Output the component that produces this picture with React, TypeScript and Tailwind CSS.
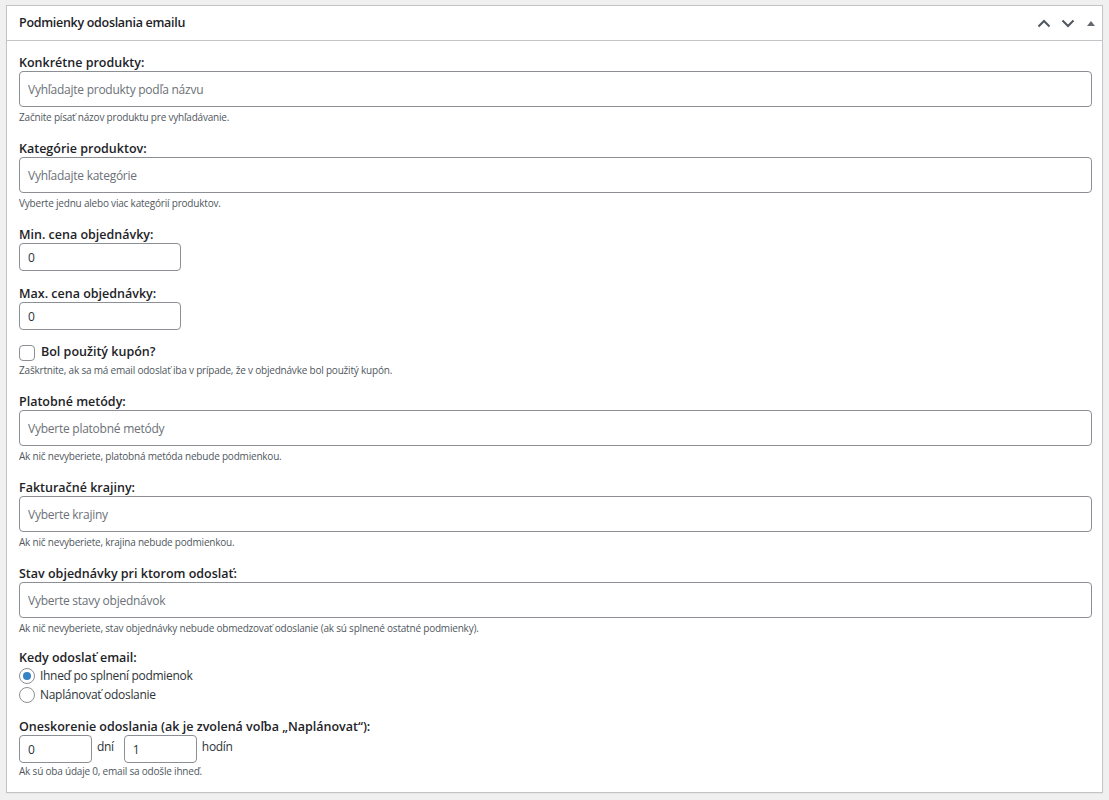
const label = 'block text-[12.5px] font-semibold leading-[17px] text-[#1d2327]';
const wide =
  'block h-[36px] w-full rounded-[4px] border border-[#8c8f94] bg-white px-[8px] text-[12px] tracking-[-0.25px] text-[#2c3338] placeholder-[#6b7177] outline-none';
const small =
  'block h-[28px] rounded-[4px] border border-[#8c8f94] bg-white px-[8px] text-[12px] text-[#2c3338] outline-none';
const desc = 'text-[10px] leading-[16px] tracking-[-0.2px] text-[#50575e]';
const text = 'text-[12px] tracking-[-0.3px] text-[#2c3338]';

function Chevron({ up }: { up?: boolean }) {
  return (
    <svg width="14" height="9" viewBox="0 0 14 9" fill="none">
      <path
        d={up ? 'M1.5 7.5 L7 2 L12.5 7.5' : 'M1.5 1.5 L7 7 L12.5 1.5'}
        stroke="#50575e"
        strokeWidth="2"
      />
    </svg>
  );
}

function SearchField({
  title,
  placeholder,
  help,
  first,
}: {
  title: string;
  placeholder: string;
  help: string;
  first?: boolean;
}) {
  return (
    <div className={first ? '' : 'mt-[15px]'}>
      <label className={label}>{title}</label>
      <input type="text" placeholder={placeholder} className={wide} />
      <p className={`mt-[2px] ${desc}`}>{help}</p>
    </div>
  );
}

export default function App() {
  return (
    <div className="min-h-screen bg-[#f0f0f1] pb-[8px] pl-[6px] pr-[6px] pt-[5px] font-['Open_Sans',sans-serif]">
      <div className="border border-[#c3c4c7] bg-white shadow-[0_1px_1px_rgba(0,0,0,0.04)]">
        {/* Header */}
        <div className="flex h-[35px] items-center justify-between border-b border-[#c3c4c7] pl-[12px]">
          <h2 className="text-[12.5px] font-semibold tracking-[-0.3px] text-[#1d2327]">
            Podmienky odoslania emailu
          </h2>
          <div className="flex h-full items-center">
            <button className="flex h-full w-[24px] items-center justify-center">
              <Chevron up />
            </button>
            <button className="flex h-full w-[24px] items-center justify-center">
              <Chevron />
            </button>
            <button className="flex h-full w-[22px] items-center justify-center">
              <svg width="8" height="5" viewBox="0 0 8 5">
                <path d="M0 5 L4 0 L8 5 Z" fill="#646970" />
              </svg>
            </button>
          </div>
        </div>

        {/* Body */}
        <div className="pb-[13px] pl-[12px] pr-[10px] pt-[13px]">
          <SearchField
            first
            title="Konkrétne produkty:"
            placeholder="Vyhľadajte produkty podľa názvu"
            help="Začnite písať názov produktu pre vyhľadávanie."
          />
          <SearchField
            title="Kategórie produktov:"
            placeholder="Vyhľadajte kategórie"
            help="Vyberte jednu alebo viac kategórií produktov."
          />

          <div className="mt-[15px]">
            <label className={label}>Min. cena objednávky:</label>
            <input type="text" defaultValue="0" className={`${small} w-[162px]`} />
          </div>

          <div className="mt-[14px]">
            <label className={label}>Max. cena objednávky:</label>
            <input type="text" defaultValue="0" className={`${small} w-[162px]`} />
          </div>

          <div className="mt-[14px]">
            <label className="flex h-[17px] items-center">
              <span className="h-[16px] w-[16px] rounded-[4px] border border-[#8c8f94] bg-white" />
              <span className="ml-[6px] text-[12.5px] font-semibold text-[#1d2327]">
                Bol použitý kupón?
              </span>
            </label>
            <p className={`mt-[1px] ${desc}`}>
              Zaškrtnite, ak sa má email odoslať iba v prípade, že v objednávke
              bol použitý kupón.
            </p>
          </div>

          <SearchField
            title="Platobné metódy:"
            placeholder="Vyberte platobné metódy"
            help="Ak nič nevyberiete, platobná metóda nebude podmienkou."
          />
          <SearchField
            title="Fakturačné krajiny:"
            placeholder="Vyberte krajiny"
            help="Ak nič nevyberiete, krajina nebude podmienkou."
          />
          <SearchField
            title="Stav objednávky pri ktorom odoslať:"
            placeholder="Vyberte stavy objednávok"
            help="Ak nič nevyberiete, stav objednávky nebude obmedzovať odoslanie (ak sú splnené ostatné podmienky)."
          />

          {/* When to send */}
          <div className="mt-[13px]">
            <span className={label}>Kedy odoslať email:</span>
            <label className="flex h-[19px] items-center">
              <span className="flex h-[16px] w-[16px] items-center justify-center rounded-full border border-[#8c8f94] bg-white">
                <span className="h-[8px] w-[8px] rounded-full bg-[#3582c4]" />
              </span>
              <span className={`ml-[5px] ${text}`}>Ihneď po splnení podmienok</span>
            </label>
            <label className="flex h-[19px] items-center">
              <span className="h-[16px] w-[16px] rounded-full border border-[#8c8f94] bg-white" />
              <span className={`ml-[5px] ${text}`}>Naplánovať odoslanie</span>
            </label>
          </div>

          {/* Delay */}
          <div className="mt-[14px]">
            <label className={label}>
              Oneskorenie odoslania (ak je zvolená voľba „Naplánovat“):
            </label>
            <div className="flex items-start">
              <input type="text" defaultValue="0" className={`${small} w-[73px]`} />
              <span className={`ml-[5px] mt-[3px] ${text}`}>dní</span>
              <input type="text" defaultValue="1" className={`${small} ml-[10px] w-[73px]`} />
              <span className={`ml-[5px] mt-[3px] ${text}`}>hodín</span>
            </div>
            <p className={desc}>Ak sú oba údaje 0, email sa odošle ihneď.</p>
          </div>
        </div>
      </div>
    </div>
  );
}
